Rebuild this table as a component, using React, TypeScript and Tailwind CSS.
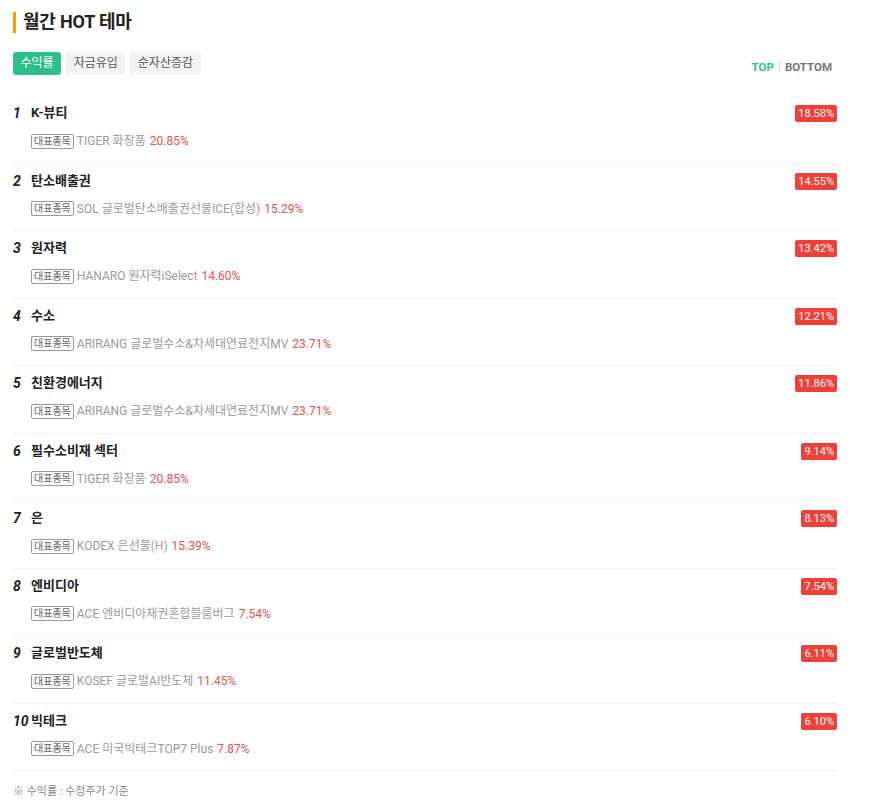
import { useState } from 'react'

type Theme = {
  name: string
  rate: string
  etf: string
  etfRate: string
}

const themes: Theme[] = [
  { name: 'K-뷰티', rate: '18.58%', etf: 'TIGER 화장품', etfRate: '20.85%' },
  { name: '탄소배출권', rate: '14.55%', etf: 'SOL 글로벌탄소배출권선물ICE(합성)', etfRate: '15.29%' },
  { name: '원자력', rate: '13.42%', etf: 'HANARO 원자력iSelect', etfRate: '14.60%' },
  { name: '수소', rate: '12.21%', etf: 'ARIRANG 글로벌수소&차세대연료전지MV', etfRate: '23.71%' },
  { name: '친환경에너지', rate: '11.86%', etf: 'ARIRANG 글로벌수소&차세대연료전지MV', etfRate: '23.71%' },
  { name: '필수소비재 섹터', rate: '9.14%', etf: 'TIGER 화장품', etfRate: '20.85%' },
  { name: '은', rate: '8.13%', etf: 'KODEX 은선물(H)', etfRate: '15.39%' },
  { name: '엔비디아', rate: '7.54%', etf: 'ACE 엔비디아채권혼합블룸버그', etfRate: '7.54%' },
  { name: '글로벌반도체', rate: '6.11%', etf: 'KOSEF 글로벌AI반도체', etfRate: '11.45%' },
  { name: '빅테크', rate: '6.10%', etf: 'ACE 미국빅테크TOP7 Plus', etfRate: '7.87%' },
]

const tabs = ['수익률', '자금유입', '순자산증감']

export default function App() {
  const [tab, setTab] = useState('수익률')
  const [order, setOrder] = useState<'top' | 'bottom'>('top')

  return (
    <main className="min-h-screen bg-white font-['Roboto','Noto_Sans_CJK_KR',sans-serif] text-[#222]">
      <div className="ml-[13px] w-[824px] pt-[11px]">
        <h2 className="flex h-[22px] items-center">
          <span className="mr-[7px] h-[21px] w-[3px] bg-[#f5a300]" />
          <span className="text-[18px] font-bold leading-[22px] tracking-[-0.2px] text-[#222]">
            월간 HOT 테마
          </span>
        </h2>

        <div className="mt-[19px] flex h-[23px] items-center justify-between">
          <div className="flex gap-[5px]">
            {tabs.map((t) => (
              <button
                key={t}
                type="button"
                onClick={() => setTab(t)}
                className={
                  tab === t
                    ? 'h-[23px] rounded-[3px] bg-[#2fbf8c] px-[7.5px] text-[12px] leading-[23px] text-white'
                    : 'h-[23px] rounded-[3px] bg-[#f3f3f3] px-[7.5px] text-[12px] leading-[23px] text-[#555]'
                }
              >
                {t}
              </button>
            ))}
          </div>
          <div className="mr-[5px] mt-[7px] flex items-center text-[11.5px] font-bold leading-[14px]">
            <button
              type="button"
              onClick={() => setOrder('top')}
              className={order === 'top' ? 'text-[#2fbf8c]' : 'text-[#777]'}
            >
              TOP
            </button>
            <span className="mx-[5px] h-[12px] w-px bg-[#ddd]" />
            <button
              type="button"
              onClick={() => setOrder('bottom')}
              className={order === 'bottom' ? 'text-[#2fbf8c]' : 'text-[#777]'}
            >
              BOTTOM
            </button>
          </div>
        </div>

        <ul className="mt-[21px]">
          {themes.map((item, i) => (
            <li key={item.name + i} className="border-b border-[#f0f0f0] pb-[12.5px] pt-[8px]">
              <div className="flex h-[18px] items-center justify-between">
                <div className="flex items-center">
                  <span className="w-[18px] text-[14px] font-bold italic leading-[18px] text-[#222]">
                    {i + 1}
                  </span>
                  <span className="text-[13px] font-bold leading-[18px] text-[#222]">{item.name}</span>
                </div>
                <span className="mt-[1px] rounded-[2px] bg-[#f0403a] px-[3px] text-[11px] leading-[17px] text-white">
                  {item.rate}
                </span>
              </div>
              <div className="mt-[10px] flex h-[18px] items-center pl-[18px] text-[12px] leading-[18px]">
                <span className="mr-[3px] rounded-[2px] border border-[#999] px-[2px] text-[10px] leading-[13px] text-[#666]">
                  대표종목
                </span>
                <span className="text-[#9a9a9a]">{item.etf}</span>
                <span className="ml-[4px] text-[#e5534b]">{item.etfRate}</span>
              </div>
            </li>
          ))}
        </ul>

        <p className="mt-[13px] text-[11px] leading-[16px] text-[#888]">※ 수익률 : 수정주가 기준</p>
      </div>
    </main>
  )
}
